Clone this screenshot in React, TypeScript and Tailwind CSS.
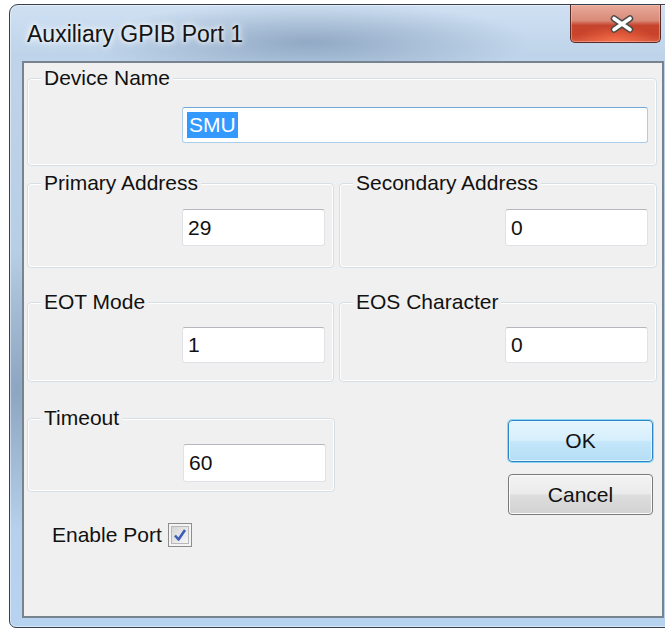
import React from "react";

type BoxProps = {
  label: string;
  className: string;
  bodyClass: string;
  children: React.ReactNode;
};

// Etched Win7-style group box built on fieldset/legend
function GroupBox({ label, className, bodyClass, children }: BoxProps) {
  return (
    <fieldset
      className={`rounded-[4px] border border-[#d6dfe5] shadow-[inset_0_0_0_1px_#ffffff] ${className}`}
    >
      <legend className="ml-[13px] px-[3px] bg-[#f0f0f0] leading-[24px]">{label}</legend>
      <div className={`flex justify-end pr-[8px] ${bodyClass}`}>{children}</div>
    </fieldset>
  );
}

function TextBox({ value, className }: { value: string; className: string }) {
  return (
    <div
      className={`flex items-center pl-[5px] bg-white rounded-[3px] border border-[#dfe2e6] border-t-[#b4b8be] ${className}`}
    >
      {value}
    </div>
  );
}

function CloseGlyph() {
  return (
    <svg width="30" height="20" viewBox="0 0 30 20" className="ml-[12px]">
      <path d="M7 4.5 L23 15.5 M23 4.5 L7 15.5" stroke="#4a4a4a" strokeWidth="6.5" strokeLinecap="round" fill="none" />
      <path d="M7 4.5 L23 15.5 M23 4.5 L7 15.5" stroke="#ffffff" strokeWidth="3.6" strokeLinecap="round" fill="none" />
    </svg>
  );
}

function CheckGlyph() {
  return (
    <svg width="16" height="16" viewBox="0 0 16 16">
      <path d="M3 8.5 L6.5 12.5 L13 3" stroke="#3d5cb8" strokeWidth="2.6" fill="none" strokeLinejoin="round" />
    </svg>
  );
}

export default function App() {
  return (
    <div className="w-[665px] h-[630px] overflow-hidden bg-white font-['Liberation_Sans',Arial,sans-serif] text-[21px] leading-[24px] text-[#111111]">
      {/* window frame */}
      <div className="ml-[9px] mt-[4px] w-[668px] h-[624px] flex flex-col rounded-t-[9px] rounded-b-[7px] border border-[#34404e] px-[12px] pb-[9px] shadow-[inset_0_0_0_1px_rgba(255,255,255,0.45)] bg-[image:radial-gradient(ellipse_220px_40px_at_45%_6%,rgba(105,132,165,0.55),transparent),radial-gradient(ellipse_60px_140px_at_1%_62%,rgba(90,115,145,0.45),transparent),linear-gradient(to_bottom,#cfe0f2_0%,#bfd4ea_8%,#b5cce4_50%,#b6d3f0_100%)]">
        {/* caption bar */}
        <div className="h-[56px] shrink-0 flex items-start">
          <div className="ml-[5px] mt-[16px] text-[23px] leading-[26px] text-[#141414] [text-shadow:0_0_10px_#ffffff,0_0_5px_#ffffff]">
            Auxiliary GPIB Port 1
          </div>
          <div className="ml-auto mr-[3px] w-[91px] h-[38px] flex items-center justify-center rounded-b-[5px] border border-t-0 border-[#5a2b24] shadow-[inset_0_0_0_1px_rgba(255,200,190,0.45)] bg-[image:radial-gradient(ellipse_40px_14px_at_50%_95%,rgba(255,120,80,0.7),transparent),linear-gradient(to_bottom,#e8aa9a_0%,#d98a78_42%,#c6442d_55%,#c9432b_80%,#d65a3e_100%)]">
            <CloseGlyph />
          </div>
        </div>

        {/* client area */}
        <div className="flex-1 flex flex-col border-2 border-[#77838f] bg-[#f0f0f0]">
          <GroupBox label="Device Name" className="mt-[3px] ml-[3px] mr-[5px]" bodyClass="pt-[17px] pb-[22px]">
            <div className="w-[466px] h-[36px] flex items-center pl-[4px] bg-white rounded-[3px] border border-[#a9cdea] border-t-[#6ea6d6]">
              <span className="bg-[#3399ff] text-white px-[2px] leading-[26px]">SMU</span>
            </div>
          </GroupBox>

          <div className="mt-[5px] ml-[3px] mr-[5px] flex gap-[5px]">
            <GroupBox label="Primary Address" className="w-[307px]" bodyClass="pt-[14px] pb-[21px]">
              <TextBox value="29" className="w-[143px] h-[37px]" />
            </GroupBox>
            <GroupBox label="Secondary Address" className="flex-1" bodyClass="pt-[14px] pb-[21px]">
              <TextBox value="0" className="w-[143px] h-[37px]" />
            </GroupBox>
          </div>

          <div className="mt-[22px] ml-[3px] mr-[5px] flex gap-[5px]">
            <GroupBox label="EOT Mode" className="w-[307px]" bodyClass="pt-[13px] pb-[18px]">
              <TextBox value="1" className="w-[143px] h-[36px]" />
            </GroupBox>
            <GroupBox label="EOS Character" className="flex-1" bodyClass="pt-[13px] pb-[18px]">
              <TextBox value="0" className="w-[143px] h-[36px]" />
            </GroupBox>
          </div>

          <div className="mt-[24px] ml-[3px] mr-[9px] flex items-start">
            <GroupBox label="Timeout" className="w-[308px]" bodyClass="pt-[14px] pb-[9px]">
              <TextBox value="60" className="w-[143px] h-[38px]" />
            </GroupBox>
            <div className="ml-auto mt-[14px] flex flex-col gap-[12px]">
              <button className="w-[145px] h-[42px] rounded-[4px] border border-[#2f86c6] shadow-[0_0_0_1px_#8ad6f6,inset_0_0_0_1px_#e6f6fd] bg-[image:linear-gradient(to_bottom,#e6f5fd_0%,#d6effc_48%,#c3e6fa_52%,#b4def6_100%)] leading-[24px] text-[#111111]">
                OK
              </button>
              <button className="w-[145px] h-[41px] rounded-[4px] border border-[#7a7a7a] shadow-[inset_0_0_0_1px_#fbfbfb] bg-[image:linear-gradient(to_bottom,#f3f3f3_0%,#ebebeb_48%,#dddddd_52%,#d2d2d2_100%)] leading-[24px] text-[#111111]">
                Cancel
              </button>
            </div>
          </div>

          <div className="mt-[8px] ml-[28px] flex items-center gap-[6px]">
            <span>Enable Port</span>
            <div className="w-[24px] h-[24px] border border-[#8d8d8d] p-[2px] bg-[#f4f4f4]">
              <div className="w-full h-full flex items-center justify-center border border-[#b9b9b9] bg-[image:linear-gradient(to_bottom_right,#d5d5d5,#f7f7f7)]">
                <CheckGlyph />
              </div>
            </div>
          </div>
        </div>
      </div>
    </div>
  );
}
